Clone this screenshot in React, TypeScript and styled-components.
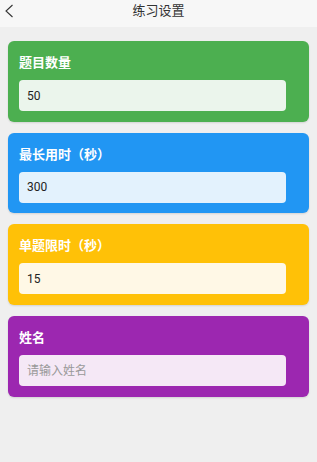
import React from "react";
import styled, { createGlobalStyle } from "styled-components";

const GlobalStyle = createGlobalStyle`
  html, body {
    margin: 0;
    padding: 0;
    background: #efefef;
    font-family: Roboto, "Noto Sans CJK SC", sans-serif;
  }
`;

const Page = styled.div`
  width: 317px;
  min-height: 462px;
  background: #efefef;
`;

const Header = styled.div`
  height: 27px;
  box-sizing: border-box;
  padding-top: 3px;
  background: #f7f7f7;
  display: flex;
  align-items: flex-start;
  justify-content: center;
  position: relative;
  font-size: 13px;
  line-height: 16px;
  color: #333;
`;

const Back = styled.span`
  position: absolute;
  left: 3px;
  top: 3px;
  display: flex;
`;

const List = styled.div`
  display: flex;
  flex-direction: column;
  gap: 11px;
  padding: 14px 8px;
`;

const Card = styled.div<{ $bg: string }>`
  background: ${(p) => p.$bg};
  border-radius: 6px;
  padding: 12px 11px 10.7px;
  box-shadow: 0 1px 2px rgba(0, 0, 0, 0.12);
`;

const Label = styled.div`
  color: #fff;
  font-weight: bold;
  font-size: 13px;
  line-height: 20px;
  margin-bottom: 7px;
`;

const Input = styled.input<{ $bg: string }>`
  display: block;
  box-sizing: border-box;
  width: 267px;
  height: 31px;
  border: none;
  outline: none;
  border-radius: 4px;
  background: ${(p) => p.$bg};
  padding: 0 8px;
  font-size: 12px;
  font-family: Roboto, "Noto Sans CJK SC", sans-serif;
  color: #222;
  &::placeholder {
    color: #999;
  }
`;

const fields = [
  { label: "题目数量", value: "50", bg: "#4caf50", inputBg: "#ebf5ec" },
  { label: "最长用时（秒）", value: "300", bg: "#2196f3", inputBg: "#e3f2fd" },
  { label: "单题限时（秒）", value: "15", bg: "#ffc107", inputBg: "#fff8e6" },
  { label: "姓名", value: "", bg: "#9c27b0", inputBg: "#f5e8f6", placeholder: "请输入姓名" },
];

export default function App() {
  return (
    <Page>
      <GlobalStyle />
      <Header>
        <Back>
          <svg width="14" height="16" viewBox="0 0 14 16">
            <path d="M9.5 2 L3 8 L9.5 14" fill="none" stroke="#333" strokeWidth="1.1" />
          </svg>
        </Back>
        练习设置
      </Header>
      <List>
        {fields.map((f) => (
          <Card key={f.label} $bg={f.bg}>
            <Label>{f.label}</Label>
            <Input $bg={f.inputBg} defaultValue={f.value} placeholder={f.placeholder} />
          </Card>
        ))}
      </List>
    </Page>
  );
}
